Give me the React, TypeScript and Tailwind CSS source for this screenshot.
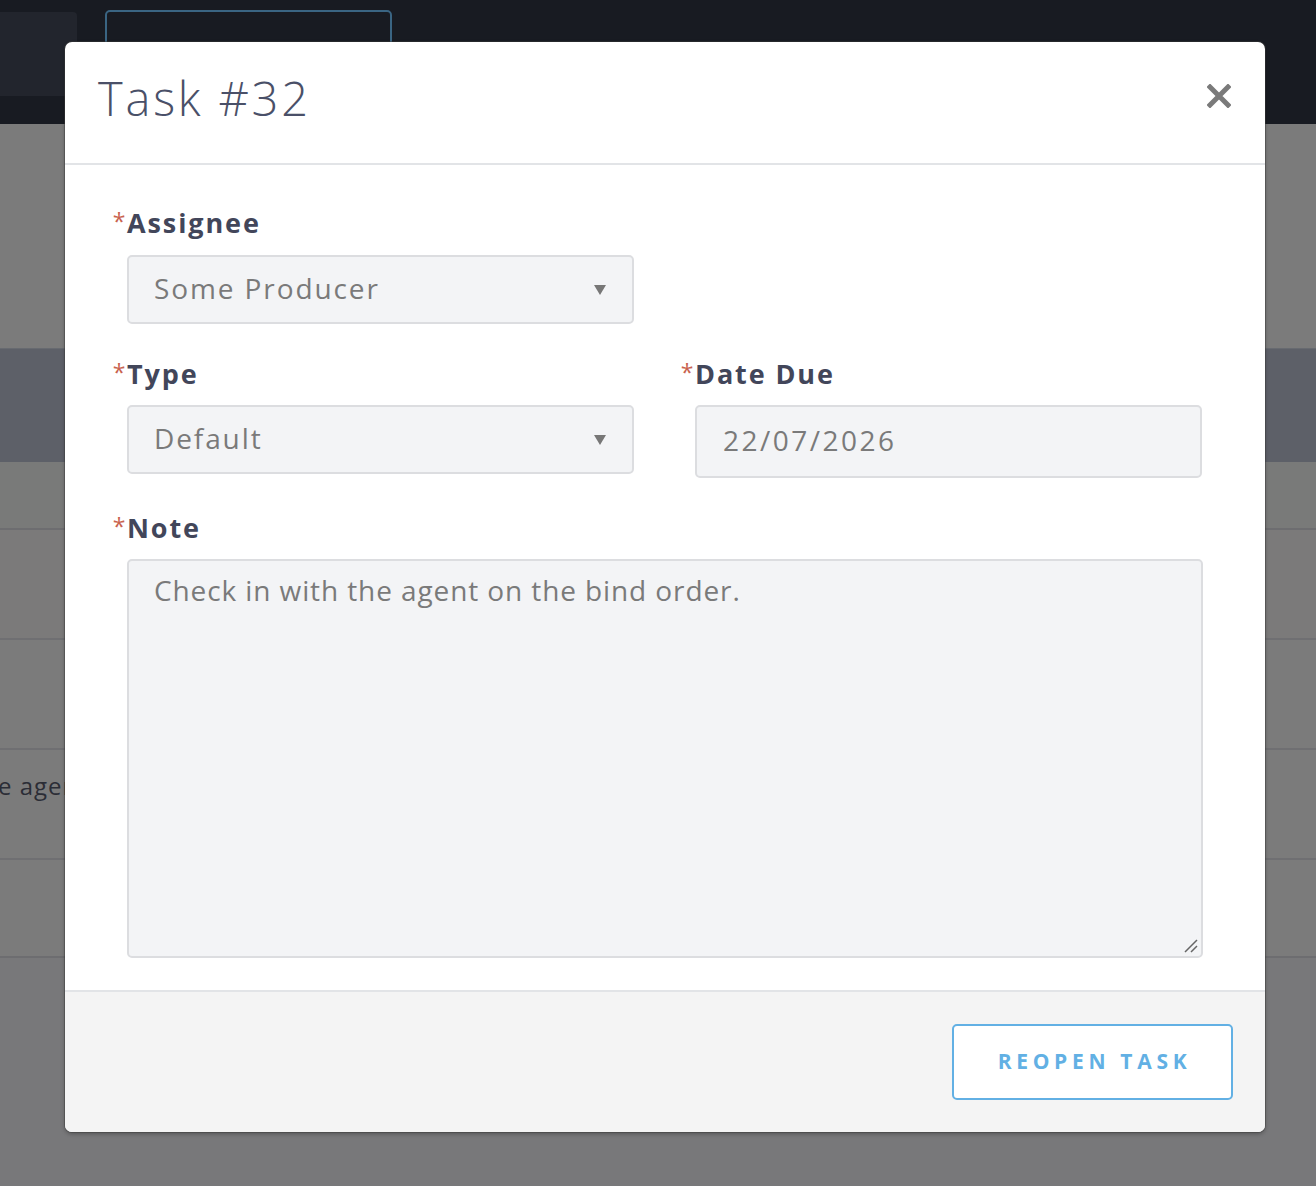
import React from "react";

const font = { fontFamily: "'Open Sans', Lato, sans-serif" };

function Label({ children }: { children: React.ReactNode }) {
  return (
    <div className="flex items-start h-[30px]">
      <span className="text-[23px] leading-[26px] w-[16px] text-center text-[#c9634f] font-normal">*</span>
      <span className="text-[27px] leading-[30px] font-bold text-[#42465a] tracking-[1.9px]">{children}</span>
    </div>
  );
}

function SelectBox({ value }: { value: string }) {
  return (
    <div className="ml-[16px] w-[507px] h-[69px] bg-[#f3f4f6] border-2 border-[#dcdde0] rounded-[5px] flex items-center justify-between pl-[25px] pr-[26px]">
      <span className="text-[28px] text-[#7a7a7a] tracking-[1.9px] pb-[4px]">{value}</span>
      <svg width="12" height="10" viewBox="0 0 12 10"><path d="M0 0 L12 0 L6 10 Z" fill="#777" /></svg>
    </div>
  );
}

export default function App() {
  return (
    <div className="relative w-[1316px] h-[1186px] overflow-hidden" style={font}>
      {/* background page */}
      <div className="flex flex-col h-full">
        <div className="h-[124px] bg-[#181b22] relative shrink-0">
          <div className="absolute left-0 top-[12px] w-[77px] h-[84px] bg-[#22252d] rounded-r-[4px]" />
          <div className="absolute left-[105px] top-[10px] w-[287px] h-[120px] border-2 border-[#3a6583] rounded-[5px]" />
        </div>
        <div className="h-[224px] bg-[#7b7b7b] shrink-0" />
        <div className="h-[114px] bg-[#5d6068] border-t border-[#676a70] shrink-0" />
        <div className="h-[68px] bg-[#797a79] border-b-2 border-[#6d6d70] shrink-0" />
        <div className="h-[110px] bg-[#7b7a7a] border-b-2 border-[#6f6f72] shrink-0" />
        <div className="h-[110px] bg-[#7b7b7b] border-b-2 border-[#6f6f72] shrink-0" />
        <div className="h-[110px] bg-[#7b7b7b] border-b-2 border-[#6f6f72] shrink-0 pt-[18px] overflow-hidden">
          <div className="text-[24px] text-[#2b2d36] tracking-[1px] whitespace-nowrap -ml-[2px]">e agent on the bind order.</div>
        </div>
        <div className="h-[98px] bg-[#7b7b7b] border-b-2 border-[#6d6d70] shrink-0" />
        <div className="flex-1 bg-[#78787a]" />
      </div>

      {/* modal */}
      <div className="absolute left-[65px] top-[42px] w-[1200px] h-[1090px] bg-white rounded-[7px] shadow-[0_0_0_1px_rgba(60,60,60,0.45),0_2px_4px_rgba(0,0,0,0.3)] flex flex-col overflow-hidden">
        <div className="h-[123px] border-b-2 border-[#e2e4e7] flex items-center justify-between pl-[33px] pr-[34px] shrink-0">
          <span className="text-[47px] font-light text-[#4a5068] tracking-[2.8px] pb-[8px]">Task #32</span>
          <svg width="24" height="24" viewBox="0 0 24 24" className="mb-[14px]">
            <path d="M3 3 L21 21 M21 3 L3 21" stroke="#7a7a7a" strokeWidth="5" strokeLinecap="square" />
          </svg>
        </div>
        <div className="flex-1 pl-[46px] pr-[62px] pt-[43px]">
          <Label>Assignee</Label>
          <div className="mt-[17px]"><SelectBox value="Some Producer" /></div>
          <div className="flex mt-[35px] gap-[45px]">
            <div>
              <Label>Type</Label>
              <div className="mt-[16px]"><SelectBox value="Default" /></div>
            </div>
            <div>
              <Label>Date Due</Label>
              <div className="mt-[16px] ml-[16px] w-[507px] h-[73px] bg-[#f3f4f6] border-2 border-[#dcdde0] rounded-[5px] flex items-center pl-[26px]">
                <span className="text-[28px] text-[#7a7a7a] tracking-[2.5px] pb-[4px]">22/07/2026</span>
              </div>
            </div>
          </div>
          <div className="mt-[35px]">
            <Label>Note</Label>
            <div className="mt-[16px] ml-[16px] w-[1076px] h-[399px] bg-[#f3f4f6] border-2 border-[#dcdde0] rounded-[5px] relative pl-[25px] pt-[8px]">
              <span className="text-[28px] text-[#7a7a7a] tracking-[0.9px]">Check in with the agent on the bind order.</span>
              <svg width="16" height="16" viewBox="0 0 16 16" className="absolute right-[2px] bottom-[2px]">
                <path d="M2 14 L14 2 M8 14 L14 8" stroke="#666" strokeWidth="1.5" />
              </svg>
            </div>
          </div>
        </div>
        <div className="h-[142px] bg-[#f4f4f4] border-t-2 border-[#e2e4e7] flex items-center justify-end pr-[32px] shrink-0">
          <div className="w-[281px] h-[76px] bg-white border-2 border-[#62b0e4] rounded-[5px] flex items-center justify-center">
            <span className="text-[21px] font-bold text-[#62b0e4] tracking-[4.7px] pl-[4px]">REOPEN TASK</span>
          </div>
        </div>
      </div>
    </div>
  );
}
